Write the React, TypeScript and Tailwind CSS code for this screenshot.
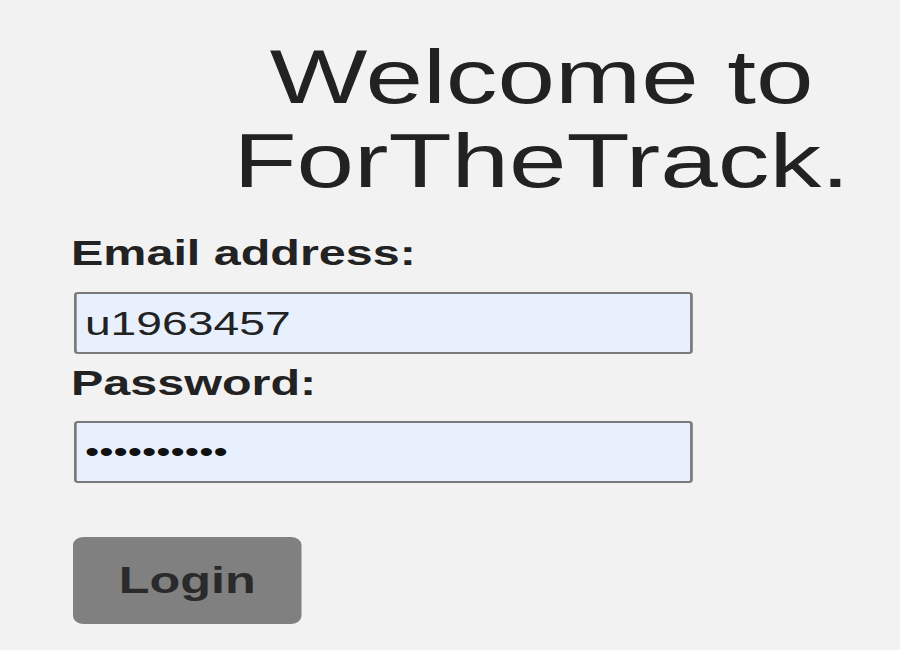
import React from "react";

// the reference is stretched wide, so text and boxes get a horizontal scale
const LoginPage = () => {
  return (
    <div className="min-h-screen overflow-hidden bg-[#f2f2f2] pt-[35px] font-['Liberation_Sans',Arial,sans-serif] text-[#222]">
      <div className="pl-[184px]">
        <h1 className="mx-auto w-fit scale-x-[1.36] text-center text-[76px] font-normal leading-[84px]">
          Welcome to
          <br />
          ForTheTrack.
        </h1>
      </div>

      <form className="mt-[30px] flex flex-col items-start pl-[71px]" onSubmit={(e) => e.preventDefault()}>
        <label htmlFor="email" className="block w-fit origin-left scale-x-[1.385] text-[35px] font-bold leading-[40px]">
          Email address:
        </label>
        <input
          id="email"
          type="text"
          defaultValue="u1963457"
          className="ml-[3px] mt-[19px] h-[62px] w-[455px] origin-left scale-x-[1.36] rounded-[3px] border-2 border-[#7a7a7a] bg-[#e8f0fe] pl-[6px] text-[34px] text-[#222] outline-none"
        />

        <label htmlFor="password" className="mt-[9px] block w-fit origin-left scale-x-[1.385] text-[35px] font-bold leading-[40px]">
          Password:
        </label>
        <input
          id="password"
          type="password"
          defaultValue="1234567890"
          className="ml-[3px] mt-[18px] h-[62px] w-[455px] origin-left scale-x-[1.36] rounded-[3px] border-2 border-[#7a7a7a] bg-[#e8f0fe] pl-[6px] text-[30px] text-[#111] outline-none"
        />

        <button
          type="submit"
          className="ml-[2px] mt-[54px] h-[87px] w-[168px] origin-left scale-x-[1.36] rounded-[8px] bg-[#808080] text-[37px] font-bold text-[#2a2a2a]"
        >
          Login
        </button>
      </form>
    </div>
  );
};

export default LoginPage;
